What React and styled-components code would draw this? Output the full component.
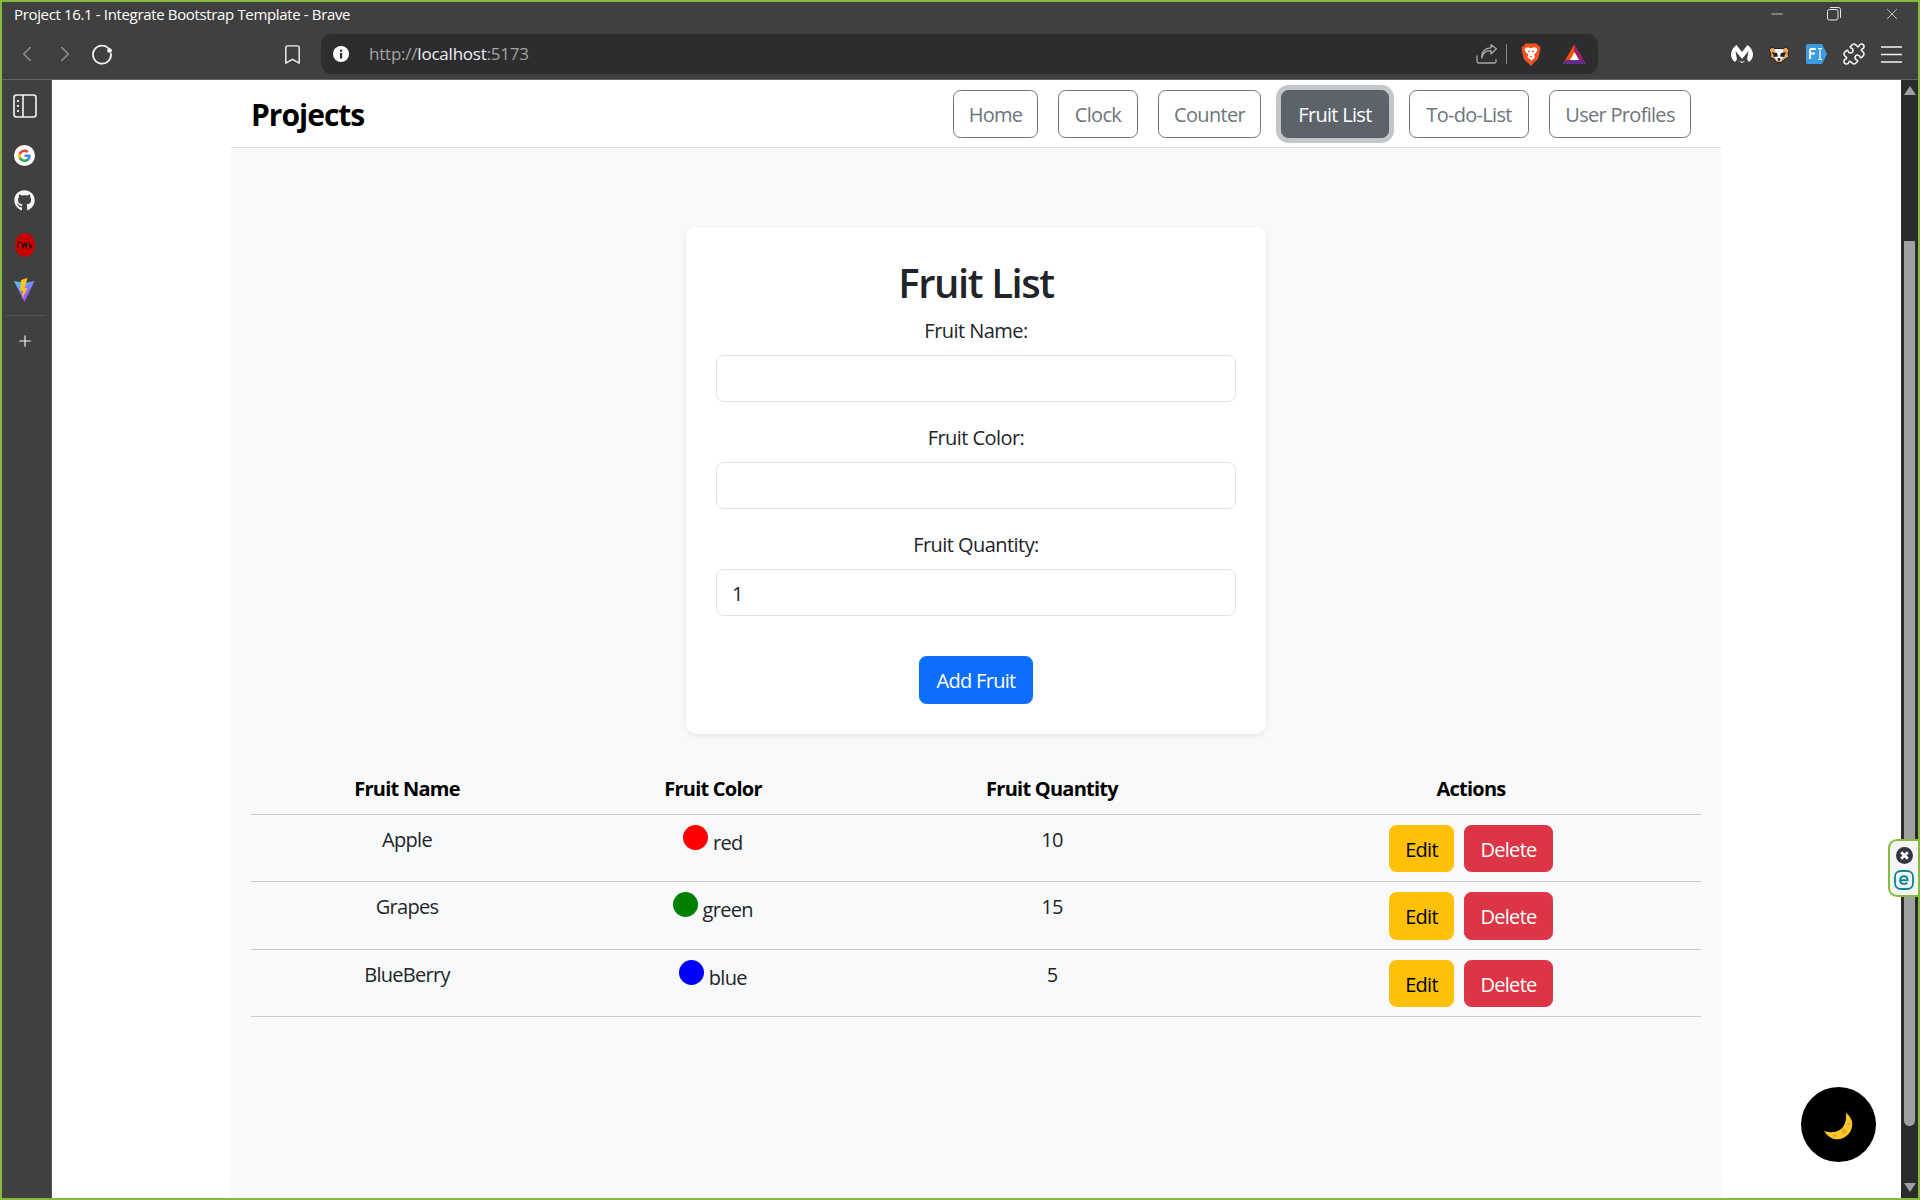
import React from "react";
import styled, { createGlobalStyle } from "styled-components";
import { FaGithub } from "react-icons/fa";
import { Bookmark, ChevronLeft, ChevronRight, Puzzle, Plus, X, Minus } from "lucide-react";

const FONT = `"Open Sans", "Noto Sans", "Liberation Sans", sans-serif`;

const Global = createGlobalStyle`
  html, body { margin: 0; padding: 0; background: #fff; }
  * { box-sizing: border-box; }
  body { font-family: ${FONT}; font-size: 20px; line-height: 30px; color: #212529; }
`;

const Frame = styled.div`
  width: 1920px;
  height: 1200px;
  border: 2px solid #86bc3e;
  display: flex;
  flex-direction: column;
  overflow: hidden;
  position: relative;
`;

const TitleBar = styled.div`
  height: 32px;
  flex: none;
  background: #404040;
  display: flex;
  align-items: flex-start;
  color: #fff;
`;

const WindowTitle = styled.div`
  flex: 1;
  padding: 0 0 0 12px;
  font-size: 15px;
  line-height: 25px;
  letter-spacing: -0.35px;
`;

const WinControl = styled.div`
  width: ${(p) => p.$w}px;
  height: 24px;
  display: flex;
  align-items: center;
  justify-content: center;
  color: #e8e8e8;
`;

const Toolbar = styled.div`
  height: 46px;
  flex: none;
  background: #404040;
  border-bottom: 1px solid #666;
  display: flex;
  align-items: flex-start;
`;

const ToolIcon = styled.div`
  width: ${(p) => p.$w}px;
  height: 40px;
  margin-left: ${(p) => p.$ml || 0}px;
  flex: none;
  display: flex;
  align-items: center;
  justify-content: center;
  color: ${(p) => p.$color || "#f2f2f2"};
`;

const AddressBar = styled.div`
  width: 1277px;
  height: 40px;
  margin-left: 16px;
  flex: none;
  background: #2d2d30;
  border-radius: 11px;
  display: flex;
  align-items: center;
`;

const Url = styled.div`
  flex: 1;
  margin-left: 20px;
  font-size: 17px;
  letter-spacing: -0.22px;
  color: #a3a3a3;
`;

const UrlHost = styled.span`
  color: #f0f0f0;
`;

const BarDivider = styled.div`
  width: 1px;
  height: 20px;
  margin-left: 9px;
  background: #888;
`;

const Body = styled.div`
  flex: 1;
  min-height: 0;
  display: flex;
`;

const Sidebar = styled.aside`
  width: 50px;
  flex: none;
  background: #404040;
  border-right: 1px solid #555;
  display: flex;
  flex-direction: column;
  align-items: center;
  padding: 13px 4px 0 0;
`;

const SideIcon = styled.div`
  width: 26px;
  height: 26px;
  margin-bottom: ${(p) => p.$mb ?? 19}px;
  display: flex;
  align-items: center;
  justify-content: center;
  color: #f4f4f4;
`;

const SideDivider = styled.div`
  width: 40px;
  height: 1px;
  background: #555;
  margin-bottom: 12px;
`;

const Viewport = styled.main`
  flex: 1;
  min-width: 0;
  background: #fff;
  overflow: hidden;
`;

const Container = styled.div`
  width: 1490px;
  height: 100%;
  margin-left: 179px;
  background: #f8f9fa;
`;

const Navbar = styled.nav`
  height: 68px;
  background: #fff;
  border-bottom: 1.25px solid #dee2e6;
  padding: 10px 20px;
  display: flex;
  align-items: flex-start;
  justify-content: space-between;
`;

const Brand = styled.div`
  font-size: 30px;
  line-height: 49px;
  font-weight: 700;
  color: #000;
  letter-spacing: -1px;
`;

const NavList = styled.div`
  display: flex;
  gap: 20px;
  margin-right: 10px;
`;

const Btn = styled.button`
  font-family: ${FONT};
  font-size: 20px;
  line-height: 30px;
  height: 47.5px;
  padding: 9px 0 6px;
  width: ${(p) => (p.$w ? `${p.$w}px` : "auto")};
  border-radius: 7.5px;
  border: 1.25px solid ${(p) => p.$border || p.$bg || "transparent"};
  background: ${(p) => p.$bg || "transparent"};
  color: ${(p) => p.$color || "#fff"};
  letter-spacing: -0.7px;
  box-shadow: ${(p) => (p.$focus ? "0 0 0 5px #c4c7ca" : "none")};
`;

const Card = styled.section`
  width: 580px;
  margin: 79px auto 30px;
  padding: 30px;
  background: #fff;
  border-radius: 10px;
  box-shadow: 0 2px 5px rgba(0, 0, 0, 0.08);
  text-align: center;
`;

const CardTitle = styled.h2`
  margin: 0 0 10px;
  padding-top: 2px;
  height: 48px;
  font-size: 40px;
  line-height: 48px;
  font-weight: 600;
  letter-spacing: -1.4px;
`;

const Field = styled.div`
  margin-bottom: 20px;
`;

const FieldLabel = styled.label`
  display: block;
  padding-top: 1px;
  margin-bottom: 8.5px;
  letter-spacing: -0.55px;
`;

const Input = styled.input`
  display: block;
  width: 100%;
  height: 47.5px;
  padding: 9px 15px 6px;
  font-family: ${FONT};
  font-size: 20px;
  letter-spacing: -0.55px;
  color: #212529;
  background: #fff;
  border: 1.25px solid #dee2e6;
  border-radius: 7.5px;
  outline: none;
`;

const SubmitRow = styled.div`
  margin-top: 40px;
  height: 47.5px;
`;

const FruitTable = styled.table`
  width: 1450px;
  margin: 0 20px;
  border-collapse: collapse;
  table-layout: fixed;
  color: #000;
  text-align: center;
  letter-spacing: -0.7px;
`;

const Th = styled.th`
  padding: 10px;
  height: 49px;
  font-weight: 700;
  border-bottom: 1px solid #c9cacb;
  letter-spacing: -0.75px;
`;

const Td = styled.td`
  padding: 10px 10px 9px;
  height: 67px;
  vertical-align: top;
  border-bottom: 1px solid #c9cacb;
  color: #212529;
`;

const Dot = styled.span`
  display: inline-block;
  width: 25px;
  height: 25px;
  border-radius: 50%;
  background: ${(p) => p.$color};
`;

const Actions = styled.div`
  display: flex;
  justify-content: center;
  gap: 10px;
`;

const Scrollbar = styled.div`
  width: 17px;
  flex: none;
  background: #2b2b2b;
  display: flex;
  flex-direction: column;
  align-items: center;
`;

const ScrollArrow = styled.div`
  width: 0;
  height: 0;
  border-left: 6px solid transparent;
  border-right: 6px solid transparent;
  ${(p) =>
    p.$down
      ? "border-top: 9px solid #a0a0a0; margin-top: 57px;"
      : "border-bottom: 9px solid #a0a0a0; margin-top: 6px;"}
`;

const ScrollThumb = styled.div`
  width: 11px;
  height: 885px;
  margin-top: 146px;
  background: #a0a0a0;
  border-radius: 0 0 6px 6px;
`;

const EsetTab = styled.div`
  position: absolute;
  right: -2px;
  top: 837px;
  width: 32px;
  height: 58px;
  padding-right: 2px;
  background: #f4f4f4;
  border: 2px solid #86bc3e;
  border-right: 0;
  border-radius: 9px 0 0 9px;
  display: flex;
  flex-direction: column;
  align-items: center;
  justify-content: center;
  gap: 6px;
`;

const ThemeToggle = styled.button`
  position: absolute;
  left: 1799px;
  top: 1085px;
  width: 75px;
  height: 75px;
  padding: 2px 0 0;
  border: 0;
  border-radius: 50%;
  background: #000;
  display: flex;
  align-items: center;
  justify-content: center;
`;

const NAV = [
  { label: "Home", w: 85 },
  { label: "Clock", w: 80 },
  { label: "Counter", w: 103 },
  { label: "Fruit List", w: 108, active: true },
  { label: "To-do-List", w: 120 },
  { label: "User Profiles", w: 142 },
];

const FRUITS = [
  { name: "Apple", color: "red", dot: "#ff0000", qty: 10 },
  { name: "Grapes", color: "green", dot: "#008000", qty: 15 },
  { name: "BlueBerry", color: "blue", dot: "#0000ff", qty: 5 },
];

const Reload = () => (
  <svg width="22" height="22" viewBox="0 0 22 22" fill="none">
    <path d="M18.2 6.2A9 9 0 1 0 20 11" stroke="#f2f2f2" strokeWidth="1.8" strokeLinecap="round" />
    <circle cx="18.6" cy="7.6" r="2.4" fill="#f2f2f2" />
  </svg>
);

const Info = () => (
  <svg width="16" height="16" viewBox="0 0 16 16">
    <circle cx="8" cy="8" r="8" fill="#fff" />
    <rect x="7" y="7" width="2.2" height="5.6" fill="#2d2d30" />
    <rect x="7" y="3.6" width="2.2" height="2.2" fill="#2d2d30" />
  </svg>
);

const Restore = () => (
  <svg width="14" height="14" viewBox="0 0 14 14" fill="none" stroke="#e8e8e8" strokeWidth="1">
    <rect x="0.5" y="2.5" width="10.5" height="10.5" rx="2" />
    <path d="M3 0.5h8.5a2 2 0 0 1 2 2V11" />
  </svg>
);

const Share = () => (
  <svg width="21" height="20" viewBox="0 0 21 20" fill="none" stroke="#a8a8a8" strokeWidth="1.3" strokeLinejoin="round">
    <path d="M1 11.5v6a1.5 1.5 0 0 0 1.5 1.5h16a1.5 1.5 0 0 0 1.5-1.5V15" />
    <path d="M6 14c.6-5 4-7.4 9-7.4V10l5.4-5.2L15 .8v3C9 4 5 8 6 14Z" />
  </svg>
);

const BraveLion = () => (
  <svg width="20" height="23" viewBox="0 0 20 23">
    <path d="M4.5 0.5h11l2 2.2 2 .5-.5 1.5.5 1-2.4 10-4.6 4.2L10 23l-2.5-2.6L2.900 16.200.5 6.200l.5-1L.5 3.700l2-.5Z" fill="#f1531f" />
    <path d="M5 4.500h3l2 .8 2-.8h3l1.500 2-1.500 3.500-2 1.200 1 3-3.500 3.300L6.500 14.200l1-3-2-1.200L3.500 6.500Z" fill="#fff" />
    <path d="M7 8l2 1M13 8l-2 1" stroke="#f1531f" strokeWidth="1.200" />
    <path d="M8.500 13h3l-1.500 1.500Z" fill="#f1531f" />
  </svg>
);

const BatTriangle = () => (
  <svg width="23" height="20" viewBox="0 0 23 20">
    <path d="M11.500 0 0 20h7l4.500-8Z" fill="#ff5000" />
    <path d="M11.500 0 23 20h-7l-4.500-8Z" fill="#9e1f63" />
    <path d="M0 20h23l-3-4H3Z" fill="#662d91" />
    <path d="M11.500 8l4.500 8H7Z" fill="#fff" />
  </svg>
);

const Malware = () => (
  <svg width="22" height="18" viewBox="0 0 22 18">
    <path d="M5.500 0C2 2.500 0 6 0 9.500c0 3 1.500 5.500 4 7.500l2-2.500L4.500 6l6.500 8 6.500-8-1.500 8.500 2 2.500c2.500-2 4-4.500 4-7.500C22 6 20 2.500 16.500 0L11 7Z" fill="#fff" />
    <path d="M7 15.500c2.500 1.500 5.500 1.500 8 0L11 18Z" fill="#fff" />
  </svg>
);

const Badger = () => (
  <svg width="22" height="17" viewBox="0 0 22 17">
    <path d="M1 4 4 1l3 1.500h8L18 1l3 3-1 4 1 3-4 2-4 3.500h-4L6 13l-4-2 1-3Z" fill="#e8a25b" stroke="#222" strokeWidth="1" />
    <path d="M7.500 3h7l2 6-3 5.500h-5L5.500 9Z" fill="#f5f5f5" />
    <path d="M4 6l5 1 1 3.500L6 11Zm14 0-5 1-1 3.500 4 .5Z" fill="#222" />
    <circle cx="11" cy="13.500" r="1.400" fill="#222" />
  </svg>
);

const FiBadge = () => (
  <svg width="21" height="20" viewBox="0 0 21 20">
    <path d="M1.500 0H16l5 10-5 10H1.500A1.500 1.500 0 0 1 0 18.500v-17A1.500 1.500 0 0 1 1.500 0Z" fill="#3d9be0" />
    <path d="M4 5h6M4 5v10M4 9.500h5" stroke="#fff" strokeWidth="1.800" fill="none" />
    <path d="M12 4.500h4M12 15.500h4M14 4.500v11" stroke="#fff" strokeWidth="1.200" fill="none" />
  </svg>
);

const Hamburger = () => (
  <svg width="21" height="17" viewBox="0 0 21 17" stroke="#f2f2f2" strokeWidth="1.600">
    <path d="M0 1h21M0 8.500h21M0 16h21" />
  </svg>
);

const PanelIcon = () => (
  <svg width="24" height="24" viewBox="0 0 24 24" fill="none" stroke="#f4f4f4" strokeWidth="1.600">
    <rect x="1" y="1" width="22" height="22" rx="2.500" />
    <path d="M10 1v22" />
    <path d="M5 6v2M5 11v2M5 16v2" strokeWidth="1.800" />
  </svg>
);

const GoogleG = () => (
  <svg width="21" height="21" viewBox="0 0 48 48">
    <circle cx="24" cy="24" r="24" fill="#fff" />
    <path d="M38 24.500c0-1-.1-2-.3-3H24v5.700h7.900c-.4 1.900-1.400 3.400-3 4.500v3.700h4.800c2.800-2.600 4.300-6.400 4.300-10.900Z" fill="#4285f4" />
    <path d="M24 39c4 0 7.300-1.300 9.700-3.600l-4.800-3.700c-1.300.9-3 1.400-4.900 1.400-3.800 0-7-2.600-8.200-6h-4.900v3.800C13.300 35.800 18.300 39 24 39Z" fill="#34a853" />
    <path d="M15.800 28.100c-.6-1.900-.6-3.900 0-5.800v-3.800h-4.900c-2 4-2 9.400 0 13.400Z" fill="#fbbc05" />
    <path d="M24 15.800c2.200 0 4.100.7 5.600 2.200l4.200-4.200C31.300 11.400 27.900 10 24 10c-5.700 0-10.700 3.200-13.100 8.500l4.900 3.800c1.200-3.500 4.400-6.500 8.200-6.500Z" fill="#ea4335" />
  </svg>
);

const RedBadge = () => (
  <svg width="20" height="24" viewBox="0 0 20 24" fill="none">
    <ellipse cx="10" cy="12" rx="10" ry="12" fill="#c80000" />
    <path d="M3 15V10c0-1.500 2.500-1.500 2.500 0M7 9.500l1 5 1.500-4.500 1.500 4.500 1-5M14 9.500l1 5 1-2.500 1 2.500" stroke="#2a0000" strokeWidth="1.200" />
  </svg>
);

const Vite = () => (
  <svg width="21" height="24" viewBox="0 0 21 24">
    <defs>
      <linearGradient id="viteA" x1="0" y1="0" x2="0.7" y2="1">
        <stop offset="0" stopColor="#41d1ff" />
        <stop offset="1" stopColor="#bd34fe" />
      </linearGradient>
    </defs>
    <path d="M0 3 10 5l10.500-2L10.500 24Z" fill="url(#viteA)" />
    <path d="M13.500 0 7 2l-1 11 3-.5-1 8.500 5.500-11-3 .5Z" fill="#ffc517" />
  </svg>
);

const Moon = () => (
  <svg width="29" height="28" viewBox="0 0 29 28">
    <path d="M21.700.7C26 4 28.500 8 28.300 12.500 28 21 21 27.300 13.300 27.300 8 27.300 3 24 0 19c6 2 12 2 16.700-1.700C21 14 23 7 21.700.7Z" fill="#fcc72b" />
    <circle cx="20" cy="19" r="2.600" fill="#e9ad1e" />
    <circle cx="11" cy="23.500" r="1.500" fill="#e9ad1e" />
    <circle cx="25" cy="12" r="1.500" fill="#e9ad1e" />
  </svg>
);

const EsetClose = () => (
  <svg width="17" height="17" viewBox="0 0 17 17">
    <circle cx="8.500" cy="8.500" r="8.500" fill="#33363f" />
    <path d="M5.200 5.200l6.600 6.600M11.800 5.200l-6.600 6.600" stroke="#fff" strokeWidth="2.800" />
  </svg>
);

const EsetLogo = () => (
  <svg width="20" height="20" viewBox="0 0 20 20" fill="none">
    <rect x="1" y="1" width="18" height="18" rx="5.500" stroke="#0b8a96" strokeWidth="1.800" />
    <path d="M6.200 10.200h7.400c0-2.600-1.500-4-3.600-4-2.300 0-3.900 1.600-3.900 3.900 0 2.400 1.500 3.900 3.900 3.900 1.300 0 2.400-.4 3.300-1.200" stroke="#0b8a96" strokeWidth="1.900" />
  </svg>
);

const App = () => (
  <Frame>
    <Global />
    <TitleBar>
      <WindowTitle>Project 16.1 - Integrate Bootstrap Template - Brave</WindowTitle>
      <WinControl $w={50}><Minus size={18} strokeWidth={1} /></WinControl>
      <WinControl $w={63}><Restore /></WinControl>
      <WinControl $w={53}><X size={18} strokeWidth={1} /></WinControl>
    </TitleBar>
    <Toolbar>
      <ToolIcon $w={28} $ml={11} $color="#8f8f8f"><ChevronLeft size={26} strokeWidth={1.5} /></ToolIcon>
      <ToolIcon $w={28} $ml={10} $color="#8f8f8f"><ChevronRight size={26} strokeWidth={1.5} /></ToolIcon>
      <ToolIcon $w={30} $ml={8}><Reload /></ToolIcon>
      <ToolIcon $w={26} $ml={162}><Bookmark size={23} strokeWidth={1.5} /></ToolIcon>
      <AddressBar>
        <ToolIcon $w={16} $ml={12}><Info /></ToolIcon>
        <Url>http://<UrlHost>localhost</UrlHost>:5173</Url>
        <ToolIcon $w={21}><Share /></ToolIcon>
        <BarDivider />
        <ToolIcon $w={20} $ml={14}><BraveLion /></ToolIcon>
        <ToolIcon $w={23} $ml={22}><BatTriangle /></ToolIcon>
        <ToolIcon $w={12} />
      </AddressBar>
      <ToolIcon $w={22} $ml={133}><Malware /></ToolIcon>
      <ToolIcon $w={22} $ml={15}><Badger /></ToolIcon>
      <ToolIcon $w={21} $ml={16}><FiBadge /></ToolIcon>
      <ToolIcon $w={24} $ml={15}><Puzzle size={24} strokeWidth={1.6} /></ToolIcon>
      <ToolIcon $w={21} $ml={15}><Hamburger /></ToolIcon>
    </Toolbar>
    <Body>
      <Sidebar>
        <SideIcon $mb={23}><PanelIcon /></SideIcon>
        <SideIcon><GoogleG /></SideIcon>
        <SideIcon><FaGithub size={21} /></SideIcon>
        <SideIcon><RedBadge /></SideIcon>
        <SideIcon $mb={12}><Vite /></SideIcon>
        <SideDivider />
        <SideIcon><Plus size={18} strokeWidth={1.6} /></SideIcon>
      </Sidebar>
      <Viewport>
        <Container>
          <Navbar>
            <Brand>Projects</Brand>
            <NavList>
              {NAV.map((item) => (
                <Btn
                  key={item.label}
                  $w={item.w}
                  $focus={item.active}
                  $bg={item.active ? "#5c636a" : undefined}
                  $border={item.active ? "#565e64" : "#6c757d"}
                  $color={item.active ? "#fff" : "#6c757d"}
                >
                  {item.label}
                </Btn>
              ))}
            </NavList>
          </Navbar>
          <Card>
            <CardTitle>Fruit List</CardTitle>
            <Field>
              <FieldLabel>Fruit Name:</FieldLabel>
              <Input type="text" readOnly />
            </Field>
            <Field>
              <FieldLabel>Fruit Color:</FieldLabel>
              <Input type="text" readOnly />
            </Field>
            <Field>
              <FieldLabel>Fruit Quantity:</FieldLabel>
              <Input type="number" readOnly value="1" />
            </Field>
            <SubmitRow>
              <Btn $w={114} $bg="#0d6efd">Add Fruit</Btn>
            </SubmitRow>
          </Card>
          <FruitTable>
            <colgroup>
              <col width="312" />
              <col width="300" />
              <col width="378" />
              <col width="460" />
            </colgroup>
            <thead>
              <tr>
                <Th>Fruit Name</Th>
                <Th>Fruit Color</Th>
                <Th>Fruit Quantity</Th>
                <Th>Actions</Th>
              </tr>
            </thead>
            <tbody>
              {FRUITS.map((fruit) => (
                <tr key={fruit.name}>
                  <Td>{fruit.name}</Td>
                  <Td><Dot $color={fruit.dot} /> {fruit.color}</Td>
                  <Td>{fruit.qty}</Td>
                  <Td>
                    <Actions>
                      <Btn $w={65} $bg="#ffc107" $color="#000">Edit</Btn>
                      <Btn $w={89} $bg="#dc3545">Delete</Btn>
                    </Actions>
                  </Td>
                </tr>
              ))}
            </tbody>
          </FruitTable>
        </Container>
      </Viewport>
      <Scrollbar>
        <ScrollArrow />
        <ScrollThumb />
        <ScrollArrow $down />
      </Scrollbar>
    </Body>
    <EsetTab>
      <EsetClose />
      <EsetLogo />
    </EsetTab>
    <ThemeToggle><Moon /></ThemeToggle>
  </Frame>
);

export default App;
